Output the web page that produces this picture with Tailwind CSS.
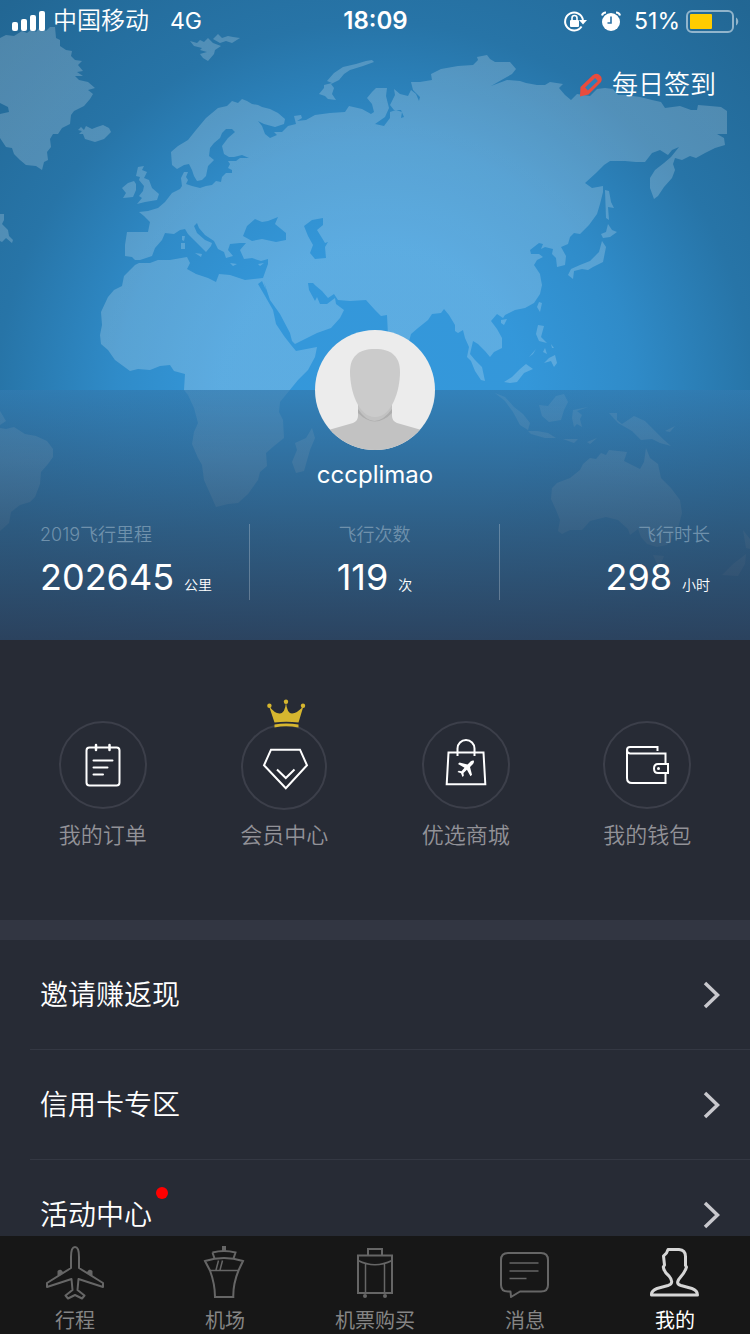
<!DOCTYPE html>
<html lang="zh-CN">
<head>
<meta charset="utf-8">
<meta name="viewport" content="width=device-width, initial-scale=1">
<title>我的</title>
<script src="https://cdn.jsdelivr.net/npm/@tailwindcss/browser@4"></script>
</head>
<body class="flex h-screen flex-col overflow-hidden bg-[#272b35] font-['Inter','Noto_Sans_CJK_SC',sans-serif] text-white">
<main class="flex-1 overflow-y-auto [scrollbar-width:none]">

  <header class="relative flex min-h-[640px] flex-col bg-[#3498db]">
    <!-- World map backdrop -->
    <svg class="absolute inset-0 h-full w-full" viewBox="0 0 750 640" preserveAspectRatio="xMidYMin slice" aria-hidden="true">
      <defs>
        <radialGradient id="shade" gradientUnits="userSpaceOnUse" cx="375" cy="400" r="540">
          <stop offset="0" stop-color="#154360" stop-opacity="0"/>
          <stop offset=".28" stop-color="#154360" stop-opacity=".01"/>
          <stop offset=".48" stop-color="#154360" stop-opacity=".15"/>
          <stop offset=".7" stop-color="#154360" stop-opacity=".42"/>
          <stop offset="1" stop-color="#154360" stop-opacity=".58"/>
        </radialGradient>
        <linearGradient id="land" gradientUnits="userSpaceOnUse" x1="0" y1="0" x2="0" y2="640">
          <stop offset="0" stop-color="#fff" stop-opacity=".2"/>
          <stop offset=".609" stop-color="#fff" stop-opacity=".2"/>
          <stop offset=".61" stop-color="#fff" stop-opacity=".09"/>
          <stop offset=".72" stop-color="#fff" stop-opacity=".14"/>
          <stop offset="1" stop-color="#fff" stop-opacity=".1"/>
        </linearGradient>
      </defs>
      <rect width="750" height="390" fill="url(#shade)"/>
      <rect y="390" width="750" height="250" fill="url(#shade)" fill-opacity=".3"/>
      <g fill="url(#land)" fill-rule="evenodd">
        <path d="M0 38 6 35 14 36 22 31 27 33 32 29 36 32 40 27 46 31 50 27 55 27 56 38 60 40 60 46 66 50 72 51 71 56 75 60 82 61 78 65 83 71 77 72 83 76 75 76 79 80 88 82 95 88 88 90 93 94 90 99 84 106 74 111 71 115 70 124 62 128 58 134 53 134 50 139 51 147 47 152 48 160 44 162 42 170 36 166 26 165 20 160 14 154 12 148 6 147 0 138V114L9 112 8 107 0 103Z"/>
        <path d="M0 214 4 214 4 220 2 224 8 230 9 236 13 240 12 243 6 238 2 242 0 241Z"/>
        <path d="M78 130 81 127 84 130 86 126 92 129 97 127 103 125 109 128 111 132 104 139 95 142 85 139 83 134 79 134 82 131Z"/>
        <path d="M190 41 197 43 200 40 204 42 208 38 213 43 221 46 215 50 214 54 208 61 203 58 200 54 207 52 200 50 202 48 194 46Z"/>
        <path d="M213 39 218 34 222 38 228 36 233 37 240 38 232 43 226 41 220 43Z"/>
        <path d="M366 61 372 60 374 62 363 66 350 70 344 74 339 80 331 84 334 88 332 94 336 100 328 99 325 96 319 94 324 88 324 85 332 83 327 81 334 73 343 67 356 64Z"/>
        <path d="M138 167 144 166 142 170 147 172 144 178 149 180 152 188 159 194 157 200 145 202 137 204 142 198 139 196 143 191 144 186 139 180 140 177 136 176Z"/>
        <path d="M128 183 134 181 136 184 136 190 133 197 123 198 126 193 122 188Z"/>
        <path d="M139 212 148 211 158 208 165 202 172 193 180 189 182 186 181 178 184 172 188 172 186 177 188 180 186 184 192 186 200 188 206 186 212 185 216 181 221 182 222 177 226 173 232 173 232 170 228 168 230 164 228 161 236 161 240 158 249 158 242 155 234 157 229 157 224 154 222 146 228 138 235 132 232 129 226 129 222 133 220 138 214 143 210 148 209 156 214 160 208 166 206 176 202 180 197 181 194 176 192 170 189 164 184 165 177 169 172 165 171 152 178 146 188 140 196 130 206 118 212 113 218 108 227 106 232 101 238 103 242 99 247 101 252 104 258 105 262 107 270 109 278 113 285 119 284 124 275 127 264 124 258 121 262 126 265 134 270 138 277 135 274 132 282 132 288 126 296 124 294 116 301 115 302 118 297 121 306 120 315 115 330 113 345 112 349 106 362 109 371 114 374 112 372 104 367 98 372 92 376 88 387 88 386 96 389 108 385 117 375 124 384 126 390 118 390 112 396 110 402 112 401 118 404 117 401 110 394 110 390 105 395 95 394 89 400 94 408 96 411 90 416 94 419 101 420 97 413 90 411 82 420 82 432 80 431 74 441 69 458 66 473 65 478 60 477 57 487 55 490 59 495 62 510 62 516 69 512 74 505 78 491 86 507 80 520 81 526 83 537 85 545 85 550 82 563 84 559 88 565 95 571 100 577 94 590 96 597 89 605 88 613 89 618 95 625 95 640 97 652 100 661 102 665 108 680 106 691 110 697 110 698 105 710 106 721 107 727 111 727 134 717 134 724 138 725 145 715 148 705 153 696 158 690 156 682 160 675 158 673 164 675 170 672 178 664 187 658 196 654 199 650 188 650 178 655 170 664 163 671 157 679 147 672 150 668 155 660 150 652 153 645 162 636 162 625 161 610 161 604 165 596 173 585 183 592 188 603 186 603 192 600 204 597 214 589 225 580 234 574 233 570 237 568 244 561 247 566 256 565 265 557 267 556 258 552 254 553 249 545 247 541 249 543 244 539 243 530 250 531 254 539 254 543 257 537 260 534 265 540 274 541 280 542 285 540 294 534 303 525 308 515 310 505 315 503 318 497 314 491 321 497 329 502 338 502 348 494 352 490 357 485 351 478 344 473 341 470 354 475 360 482 367 485 381 481 380 475 371 471 361 467 357 469 347 465 338 463 330 458 333 455 331 455 325 449 315 444 309 441 313 432 314 428 320 418 328 411 334 408 345 404 358 398 365 388 335 387 315 381 316 375 310 366 300 350 301 338 300 334 294 328 298 322 291 316 286 313 283 308 283 309 290 315 301 317 297 320 304 327 304 335 298 336 304 344 310 340 318 331 328 317 333 295 344 292 341 290 333 280 314 270 300 264 282 266 290 262 281 258 284 265 296 273 310 276 324 284 336 291 345 296 351 317 347 315 357 308 370 298 380 289 391 280 402 279 412 283 420 284 438 274 446 266 453 267 466 260 472 258 480 248 494 238 503 228 504 216 507 212 498 204 480 202 465 198 458 192 444 194 432 198 423 194 408 188 395 184 390 185 374 174 371 170 365 160 366 150 370 138 369 130 371 115 360 108 350 101 344 100 335 102 325 101 312 108 297 114 290 122 286 124 276 130 270 135 265 139 263 150 263 158 260 170 260 187 257 190 263 187 269 196 274 208 278 216 282 219 274 230 275 245 280 263 278 268 264 268 259 261 261 252 258 244 259 240 250 246 243 240 243 230 244 228 250 233 256 226 258 224 252 218 249 214 241 205 235 199 228 197 223 194 226 197 233 205 240 212 243 211 246 206 252 202 248 194 240 188 234 185 229 180 230 174 234 165 233 162 240 155 248 152 256 140 260 135 260 132 257 125 256 125 245 127 232 148 232 150 222 144 216ZM243 236 247 226 255 219 262 222 268 221 278 217 275 224 286 233 286 240 276 242 262 239 252 241ZM304 226 312 220 323 218 323 225 317 230 322 238 325 243 328 242 325 247 326 258 315 259 310 253 313 245 308 236Z"/>
        <path d="M182 236 185 236 184 241 182 240ZM181 243 185 243 185 249 181 249ZM195 253 202 254 201 257ZM230 263 237 264 233 266ZM258 264 264 263 260 266Z"/>
        <path d="M605 190 609 191 611 202 614 208 608 207 609 220 606 218ZM608 224 612 230 617 232 610 237 603 238 601 234 606 232ZM602 241 606 247 603 262 593 267 588 270 582 269 574 271 573 279 568 275 571 269 580 265 590 261 599 252Z"/>
        <path d="M539 302 542 303 540 312 537 307ZM501 320 507 319 504 325 501 323ZM538 325 544 326 541 337 547 343 539 341 536 334ZM545 348 547 354 543 352ZM551 344 554 348 552 348ZM549 358 555 355 557 363 554 367 551 361 544 363ZM529 357 536 349 533 354ZM504 382 512 377 520 369 526 364 533 369 524 373 517 382 510 383Z"/>
        <path d="M495 393 505 397 514 407 523 414 530 423 528 430 520 425 513 412 505 401ZM528 431 537 431 548 433 556 438 545 438 531 434ZM539 405 548 406 556 396 564 394 568 402 564 410 561 420 549 422 542 416ZM573 410 588 407 577 411 582 415 580 419 582 427 577 424 574 427 572 418ZM563 439 578 439 574 443ZM587 442 597 438 590 444ZM609 413 617 413 617 420 622 424 634 416 645 421 655 431 664 440 671 446 660 443 652 439 641 440 632 431 618 423ZM665 431 675 426 670 432Z"/>
        <path d="M552 488 557 483 570 478 580 470 583 464 590 458 596 459 601 453 606 455 609 450 627 452 624 461 634 466 640 469 644 462 646 448 650 458 658 464 661 478 671 488 680 500 682 513 678 528 667 545 657 547 647 544 641 537 638 529 630 535 628 529 618 520 606 517 590 521 582 530 570 530 562 534 558 531 560 520 556 510 551 499ZM653 555 664 556 659 568ZM743 530 750 539 750 549 746 548ZM746 554 745 564 738 576 722 575 733 564Z"/>
        <path d="M312 428 315 438 310 450 304 471 296 473 292 462 297 450 295 443 306 438ZM0 428 6 429 14 427 25 434 36 436 47 441 53 449 53 457 48 464 41 472 40 484 35 497 30 502 20 505 11 512 9 523 0 531ZM0 411 6 421 0 425Z"/>
      </g>
    </svg>

    <!-- Status bar -->
    <div class="relative grid h-[42px] grid-cols-[1fr_auto_1fr] items-center pl-3 pr-[11px] text-[23px] leading-10">
      <div class="flex items-center">
        <svg class="h-5 w-[34px]" viewBox="0 0 34 20" fill="#fff" aria-hidden="true">
          <rect x="0" y="11" width="6" height="9" rx="2"/><rect x="9" y="8" width="6" height="12" rx="2"/><rect x="18" y="4" width="6" height="16" rx="2"/><rect x="27" y="0" width="6" height="20" rx="2"/>
        </svg>
        <span class="ml-[7px] text-2xl font-[350] leading-10">中国移动</span>
        <span class="ml-[21px]">4G</span>
      </div>
      <div class="text-2xl font-semibold leading-10">18:09</div>
      <div class="flex items-center justify-end">
        <svg class="h-6 w-6" viewBox="0 0 24 24" aria-label="方向锁定">
          <path d="M18.6 17.5A9 9 0 1 1 20 11" fill="none" stroke="#fff" stroke-width="2"/>
          <path d="M16 11h8l-4 4.500z" fill="#fff"/>
          <rect x="7" y="11" width="9" height="7" rx="1" fill="#fff"/>
          <path d="M9 11V9a2.500 2.500 0 0 1 5 0v2" fill="none" stroke="#fff" stroke-width="1.600"/>
        </svg>
        <svg class="ml-3 h-6 w-6" viewBox="0 0 24 24" aria-label="闹钟">
          <circle cx="12" cy="13" r="9" fill="#fff"/>
          <path d="M3 6.500C3.500 4.500 5 3.500 7 3.500M21 6.500C20.500 4.500 19 3.500 17 3.500" fill="none" stroke="#fff" stroke-width="2"/>
          <path d="M12 7.500V14H8.500" fill="none" stroke="#2a71a6" stroke-width="1.600"/>
        </svg>
        <span class="ml-[11px]">51%</span>
        <svg class="ml-[6px] h-6 w-[53px]" viewBox="0 0 53 24" aria-hidden="true">
          <rect x="1" y="2" width="46" height="21" rx="5" fill="none" stroke="#fff" stroke-opacity=".5" stroke-width="2"/>
          <rect x="4" y="5" width="22" height="15" rx="1" fill="#fc0"/>
          <path d="M50 8.500c3 2 3 6 0 8z" fill="#fff" fill-opacity=".5"/>
        </svg>
      </div>
    </div>

    <button type="button" class="relative mr-[34px] mt-[23px] flex items-center gap-[9px] self-end text-[26px] font-[350] leading-10">
      <svg class="h-6 w-6" viewBox="0 0 24 24" aria-hidden="true">
        <path d="M1 23.500 1.500 14 13.500 2.500Q17-.5 20.500 2T22 9L9.500 21.500Z" fill="#e84c3d"/>
        <path d="M7.500 16 17.500 6.500" stroke="#2f7fb6" stroke-width="4"/>
      </svg>
      每日签到
    </button>

    <section class="relative mt-auto flex h-[250px] flex-col items-center bg-linear-to-b from-[#2e3245]/22 via-[#2b3a50]/62 via-56% to-[#2a3348]/83">
      <svg class="-mt-[60px] h-[120px] w-[120px] shrink-0 rounded-full" viewBox="0 0 120 120" role="img" aria-label="头像">
        <rect width="120" height="120" fill="#ececec"/>
        <path d="M43 74V86Q43 91 38 93L10 101V120H110V101L82 93Q77 91 77 86V74Z" fill="#c2c2c2"/>
        <path d="M43 79Q59 103 77 79L77 83Q60 100 43 83Z" fill="#aeaeae"/>
        <path d="M60 19C77 19 85 27 85 42C85 60 77 87 60 87S35 60 35 42C35 27 43 19 60 19Z" fill="#cbcbcb"/>
      </svg>
      <h1 class="mt-[9px] text-2xl font-normal leading-8">cccplimao</h1>

      <dl class="mt-[33px] grid w-full grid-cols-3 divide-x divide-white/25">
        <div class="flex h-[76px] flex-col pl-10">
          <dt class="text-lg leading-[22px] text-[#6f91ac] font-[350]">2019飞行里程</dt>
          <dd class="mt-[6px] flex items-baseline gap-[10px] text-[36px] leading-[50px]">202645<span class="text-sm font-[350]">公里</span></dd>
        </div>
        <div class="flex h-[76px] flex-col items-center">
          <dt class="text-lg leading-[22px] text-[#6f91ac] font-[350]">飞行次数</dt>
          <dd class="mt-[6px] flex items-baseline gap-[10px] text-[36px] leading-[50px]">119<span class="text-sm font-[350]">次</span></dd>
        </div>
        <div class="flex h-[76px] flex-col items-end pr-10">
          <dt class="text-lg leading-[22px] text-[#6f91ac] font-[350]">飞行时长</dt>
          <dd class="mt-[6px] flex items-baseline gap-[10px] text-[36px] leading-[50px]">298<span class="text-sm font-[350]">小时</span></dd>
        </div>
      </dl>
    </section>
  </header>

  <!-- Shortcuts -->
  <section class="grid h-[280px] grid-cols-4 px-3 pt-[81px] text-[22px] font-[350] leading-8 text-[#929298]">
    <a href="#orders" class="flex flex-col items-center gap-[10px]">
      <svg class="h-[88px] w-[88px]" viewBox="0 0 88 88" fill="none" stroke="#fff" stroke-width="2" stroke-linecap="round" aria-hidden="true">
        <circle cx="44" cy="44" r="43" stroke="#3c3f4a"/>
        <rect x="27.500" y="26.500" width="33" height="38" rx="3"/>
        <path d="M37 24v5M50.500 24v5" stroke-width="2.500"/>
        <path d="M34.500 39.500H53.500M34.500 46.500H48.500M34.500 53.500H44"/>
      </svg>
      我的订单
    </a>
    <a href="#member" class="flex flex-col items-center gap-[10px]">
      <svg class="h-[88px] w-[88px] overflow-visible" viewBox="0 0 88 88" fill="none" stroke="#fff" stroke-width="2" aria-hidden="true">
        <circle cx="44" cy="46" r="42" stroke="#3c3f4a"/>
        <g fill="#d6b62f" stroke="none">
          <circle cx="29.400" cy="-15.300" r="2.200"/><circle cx="46" cy="-19.300" r="2.200"/><circle cx="63" cy="-15.300" r="2.200"/>
          <path d="M34.500 1.500 29-15Q35-7 40-7.500T46-18.500Q47-7.500 52-7.500T63.500-15L58.500 1.500Q46 0 34.500 1.500Z"/>
          <path d="M34.500 3.500Q46 1.500 58.500 3.500V6.500Q46 4 34.500 6.500Z"/>
        </g>
        <path d="M31 28.700H60L67 44.300 45.800 67.300 24 44.300Z"/>
        <path d="M37 48.500 45.800 57 54.500 48.500"/>
      </svg>
      会员中心
    </a>
    <a href="#mall" class="flex flex-col items-center gap-[10px]">
      <svg class="h-[88px] w-[88px]" viewBox="0 0 88 88" fill="none" stroke="#fff" stroke-width="2" aria-hidden="true">
        <circle cx="44" cy="44" r="43" stroke="#3c3f4a"/>
        <path d="M26.500 31.500H61.500L63.300 63.300H24.700Z"/>
        <path d="M35.500 35V27.500a8.500 8.500 0 0 1 17 0V35"/>
        <path d="M51.700 39.500Q50.300 39 48.500 40.600L45.500 43.600 37.500 41.500 36 43 42.500 46.700 39.500 50.200 36.700 49.800 35.500 51 39 52.300 40.500 56 41.800 54.700 41.500 52 44.900 48.800 48.500 55.300 50 53.800 48 46 51 43Q52.500 41 51.700 39.500Z" fill="#fff" stroke="none"/>
      </svg>
      优选商城
    </a>
    <a href="#wallet" class="flex flex-col items-center gap-[10px]">
      <svg class="h-[88px] w-[88px]" viewBox="0 0 88 88" fill="none" stroke="#fff" stroke-width="2" aria-hidden="true">
        <circle cx="44" cy="44" r="43" stroke="#3c3f4a"/>
        <path d="M54.500 30V26H27Q24 26 24 29T27 32.500H62.500V43M62.500 52V62H29Q24 62 24 57V29"/>
        <path d="M65 43V52H55Q51 52 51 47.500T55 43Z"/>
        <circle cx="55.500" cy="47.500" r="1.500" fill="#fff" stroke="none"/>
      </svg>
      我的钱包
    </a>
  </section>

  <div class="h-5 bg-[#323642]"></div>

  <!-- Menu list -->
  <ul class="pl-[30px] text-[28px] font-[350] leading-10">
    <li class="h-[110px] border-b border-[#343843]">
      <a href="#invite" class="flex h-full items-center justify-between pl-[10px] pr-[30px]">邀请赚返现
        <svg class="h-7 w-[17px]" viewBox="0 0 17 28" fill="none" stroke="#c8c8cd" stroke-width="3.500" aria-hidden="true"><path d="M2 2 14.500 14 2 26"/></svg>
      </a>
    </li>
    <li class="h-[110px] border-b border-[#343843]">
      <a href="#credit" class="flex h-full items-center justify-between pl-[10px] pr-[30px]">信用卡专区
        <svg class="h-7 w-[17px]" viewBox="0 0 17 28" fill="none" stroke="#c8c8cd" stroke-width="3.500" aria-hidden="true"><path d="M2 2 14.500 14 2 26"/></svg>
      </a>
    </li>
    <li class="h-[110px]">
      <a href="#activity" class="flex h-full items-center justify-between pl-[10px] pr-[30px]">
        <span class="relative">活动中心<i class="absolute -right-4 -top-2 h-3 w-3 rounded-full bg-[#f00]"></i></span>
        <svg class="h-7 w-[17px]" viewBox="0 0 17 28" fill="none" stroke="#c8c8cd" stroke-width="3.500" aria-hidden="true"><path d="M2 2 14.500 14 2 26"/></svg>
      </a>
    </li>
  </ul>
</main>

<!-- Tab bar -->
<nav class="grid h-[98px] shrink-0 grid-cols-5 bg-[#171717] pt-[6px] text-xl leading-[30px] text-[#858585]">
  <a href="#trips" class="flex flex-col items-center">
    <svg class="h-16 w-16" viewBox="0 0 64 64" fill="none" stroke="#666" stroke-width="2" stroke-linejoin="round" aria-hidden="true">
      <path d="M32 5C29 5 28 10 28 15V26L4 41V45L28.500 37 29.500 48 22.500 53.500 25 56.500 32 53 39 56.500 41.500 53.500 34.500 48 35.500 37 60 45V41L36 26V15C36 10 35 5 32 5Z"/>
      <path d="M15.500 33V29.500Q17.500 27.500 19 30.500ZM48.500 33V29.500Q46.500 27.500 45 30.500Z" fill="#666"/>
    </svg>
    行程
  </a>
  <a href="#airport" class="flex flex-col items-center">
    <svg class="h-16 w-16" viewBox="0 0 64 64" fill="none" stroke="#666" stroke-width="2" aria-hidden="true">
      <rect x="29" y="4" width="4" height="5" fill="#666" stroke="none"/>
      <path d="M19.500 10.500Q31 7.500 42.500 10.500L40.500 16.500M19.500 10.500 21.500 16.500M12 19Q31 13 50 19L45.500 28.500Q40 42 40.300 55H22Q22 42 17 28.500Z"/>
      <path d="M17 28.500H45.500M25.500 18.500 23 28M29.500 18.500 27 28" stroke-width="1.500"/>
    </svg>
    机场
  </a>
  <a href="#tickets" class="flex flex-col items-center">
    <svg class="h-16 w-16" viewBox="0 0 64 64" fill="none" stroke="#666" stroke-width="2" aria-hidden="true">
      <path d="M25 13V7H39V13M15 13.500H49V51H15Z"/>
      <path d="M15 18.500Q32 27 49 18.500M22.500 22V51M41.500 22V51" stroke-width="1.500"/>
      <circle cx="22" cy="54" r="2" fill="#666" stroke="none"/><circle cx="42" cy="54" r="2" fill="#666" stroke="none"/>
    </svg>
    机票购买
  </a>
  <a href="#messages" class="flex flex-col items-center">
    <svg class="h-16 w-16" viewBox="0 0 64 64" fill="none" stroke="#666" stroke-width="2" stroke-linejoin="round" aria-hidden="true">
      <path d="M15 11H48Q55 11 55 18V43Q55 49.500 48 49.500H27L18 55 17.500 49.500H15Q8 49.500 8 43V18Q8 11 15 11Z"/>
      <path d="M16.500 21H45.500M16.500 29H45.500M16.500 36.500H33.500" stroke-width="1.500"/>
    </svg>
    消息
  </a>
  <a href="#me" aria-current="page" class="flex flex-col items-center text-white">
    <svg class="h-16 w-16" viewBox="0 0 64 64" fill="none" stroke="#d6d6d6" stroke-width="3" stroke-linejoin="round" aria-hidden="true">
      <path d="M25 7.500H36Q42.500 8 42.500 14.500V23.500L43.500 25Q42 30 38 34.500C34 39 33 42 38 43.500L49 46.500Q54.500 48.500 54.500 53H8.500Q8 49 14 46.500L25 43.500C30 42 29.500 38 26 34Q21 30 20.300 25L21.500 23 20.500 14 23.500 11Z"/>
    </svg>
    我的
  </a>
</nav>
</body>
</html>
